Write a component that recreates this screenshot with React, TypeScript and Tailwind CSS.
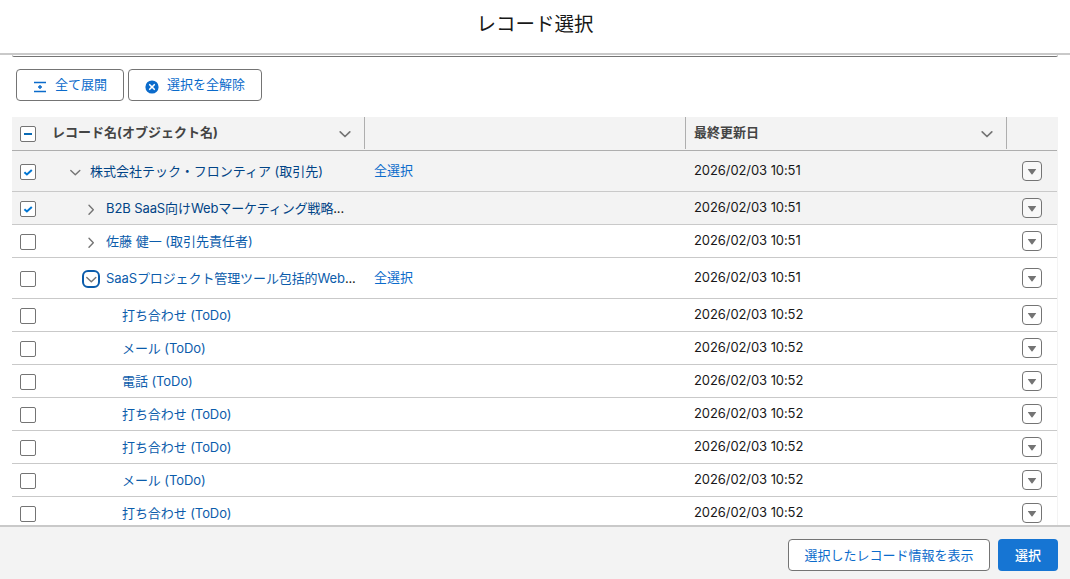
import clsx from "clsx";

type RecordRow = {
	name: string;
	date: string;
	indent: string;
	checked?: boolean;
	toggle?: "open" | "closed" | "focused";
	truncated?: boolean;
	selectAll?: boolean;
};

const records: RecordRow[] = [
	{ name: "株式会社テック・フロンティア (取引先)", date: "2026/02/03 10:51", indent: "pl-[57px]", checked: true, toggle: "open", selectAll: true },
	{ name: "B2B SaaS向けWebマーケティング戦略", date: "2026/02/03 10:51", indent: "pl-[73px]", checked: true, toggle: "closed", truncated: true },
	{ name: "佐藤 健一 (取引先責任者)", date: "2026/02/03 10:51", indent: "pl-[73px]", toggle: "closed" },
	{ name: "SaaSプロジェクト管理ツール包括的Web", date: "2026/02/03 10:51", indent: "pl-[73px]", toggle: "focused", truncated: true, selectAll: true },
	{ name: "打ち合わせ (ToDo)", date: "2026/02/03 10:52", indent: "pl-[110px]" },
	{ name: "メール (ToDo)", date: "2026/02/03 10:52", indent: "pl-[110px]" },
	{ name: "電話 (ToDo)", date: "2026/02/03 10:52", indent: "pl-[110px]" },
	{ name: "打ち合わせ (ToDo)", date: "2026/02/03 10:52", indent: "pl-[110px]" },
	{ name: "打ち合わせ (ToDo)", date: "2026/02/03 10:52", indent: "pl-[110px]" },
	{ name: "メール (ToDo)", date: "2026/02/03 10:52", indent: "pl-[110px]" },
	{ name: "打ち合わせ (ToDo)", date: "2026/02/03 10:52", indent: "pl-[110px]" },
];

const columns = "grid grid-cols-[353px_321px_321px_51px]";

function Checkbox({ state }: { state?: "checked" | "mixed" }) {
	return (
		<span className="flex size-4 shrink-0 items-center justify-center rounded-xs border border-[#747474] bg-white">
			{state === "checked" && (
				<svg viewBox="0 0 14 14" className="size-3.5" fill="none" stroke="#0176d3" strokeWidth="2">
					<path d="M3.4 7.3 5.9 9.5 10.8 4.9" />
				</svg>
			)}
			{state === "mixed" && <span className="h-0.5 w-2 bg-[#0b6bb5]" />}
		</span>
	);
}

function Chevron({ closed, small, className }: { closed?: boolean; small?: boolean; className?: string }) {
	return (
		<svg viewBox="0 0 14 14" className={clsx("size-3.5 shrink-0", className)} fill="none" stroke="#747474" strokeWidth={small ? 1.4 : 1.7} strokeLinecap="round" strokeLinejoin="round">
			<path d={closed ? "M5 3.2 9.3 7.7 5 12.2" : small ? "M2.8 5.5 7.3 9.8 11.8 5.5" : "M2.2 4.9 7 9.5 11.8 4.9"} />
		</svg>
	);
}

function HeaderCell({ label }: { label?: string }) {
	return (
		<div className="mb-px flex items-center justify-between border-r border-[#aeaeae] pl-2 pr-3">
			<span className="relative -top-px font-bold">{label}</span>
			{label && <Chevron className="relative top-px" />}
		</div>
	);
}

function Row({ row }: { row: RecordRow }) {
	return (
		<div className={clsx(columns, "shrink-0 items-center border-b border-[#c9c9c9]", row.selectAll ? "h-[41px]" : "h-[33px]", row.checked && "bg-[#f3f3f3]")}>
			<div className="flex items-center">
				<div className="relative top-px w-0 pl-2">
					<Checkbox state={row.checked ? "checked" : undefined} />
				</div>
				<div className={clsx("-ml-2 flex items-center whitespace-nowrap", row.indent)}>
					{row.toggle && (
						<span className={clsx("relative top-px -ml-[3px] mr-1.5 flex size-[18px] items-center justify-center rounded-md", row.toggle === "focused" && "border-2 border-[#0b5cab] bg-white")}>
							<Chevron small closed={row.toggle === "closed"} />
						</span>
					)}
					<a className={clsx(row.checked ? "text-[#014486]" : "text-[#0b5cab]", row.truncated ? "tracking-[-0.1px]" : !row.toggle && "tracking-[-0.08px]")}>{row.name}</a>
					{row.truncated && <span className="tracking-[-0.2px]">...</span>}
				</div>
			</div>
			<div className="relative -top-px pl-[9px]">{row.selectAll && <a className="text-[#0b6bcb]">全選択</a>}</div>
			<div className="relative -top-px pl-2 tracking-[-0.08px]">{row.date}</div>
			<div className="pl-[15px]">
				<button className="flex size-5 items-center justify-center rounded border border-[#747474] bg-white/40">
					<svg viewBox="0 0 10 7" className="mt-px h-[7px] w-2.5" fill="#747474">
						<path d="M1.3 1h7.4q.7 0 .3.6L5.5 6.2q-.5.5-1 0L1 1.6Q.6 1 1.3 1" />
					</svg>
				</button>
			</div>
		</div>
	);
}

export default function App() {
	return (
		<div className="flex h-[579px] w-[1070px] flex-col overflow-hidden bg-white font-['Inter','Noto_Sans_CJK_JP',sans-serif] text-[13px] leading-5 text-[#181818]">
			<header className="flex h-[55px] shrink-0 items-center justify-center border-b-2 border-[#c9c9c9] pb-[5px]">
				<h1 className="text-[19.5px]">レコード選択</h1>
			</header>

			<main className="flex min-h-0 flex-1 flex-col overflow-hidden">
				<div className="mx-3 h-0.5 w-[1046px] shrink-0 rounded-b border-b border-[#747474]" />
				<div className="flex shrink-0 gap-1 px-4 pt-3">
					<button className="flex h-8 w-[108px] items-center rounded border border-[#747474] pl-4 text-[#0b6bcb]">
						<svg viewBox="0 0 14 12" className="mr-2 mt-1 h-3 w-3.5" fill="none" stroke="currentColor" strokeWidth="1.4">
							<path d="M1 1.5h12M1 10.5h12M7 4v4M5 6h4" />
						</svg>
						<span className="relative -top-px">全て展開</span>
					</button>
					<button className="flex h-8 w-[134px] items-center rounded border border-[#747474] pl-4 text-[#0b6bcb]">
						<svg viewBox="0 0 14 14" className="mr-2 mt-1 size-3.5">
							<circle cx="7" cy="7" r="6.6" fill="currentColor" />
							<path d="m4.7 4.7 4.6 4.6m0-4.6L4.7 9.3" stroke="white" strokeWidth="1.6" strokeLinecap="round" />
						</svg>
						<span className="relative -top-px">選択を全解除</span>
					</button>
				</div>

				<div className="mx-3 mt-4 flex w-[1046px] shrink-0 flex-col border-r border-[#f3f3f3]">
					<div className={clsx(columns, "h-[34px] border-b border-[#aeaeae] bg-[#f3f3f3] text-[#444]")}>
						<div className="mb-px flex items-center border-r border-[#aeaeae] pl-2 pr-3">
							<span className="relative top-px"><Checkbox state="mixed" /></span>
							<span className="relative -top-px ml-4 flex-1 font-bold">レコード名(オブジェクト名)</span>
							<Chevron className="relative top-px" />
						</div>
						<HeaderCell />
						<HeaderCell label="最終更新日" />
					</div>
					{records.map((row, i) => (
						<Row key={i} row={row} />
					))}
				</div>
			</main>

			<footer className="flex h-[54px] shrink-0 items-center justify-end gap-2 border-t-2 border-[#c9c9c9] bg-[#f3f3f3] pr-3 pt-1">
				<button className="h-8 w-[202px] rounded border border-[#747474] bg-white text-[#0b6bcb]">選択したレコード情報を表示</button>
				<button className="h-8 w-[60px] rounded bg-[#1675d3] font-medium text-white">選択</button>
			</footer>
		</div>
	);
}
